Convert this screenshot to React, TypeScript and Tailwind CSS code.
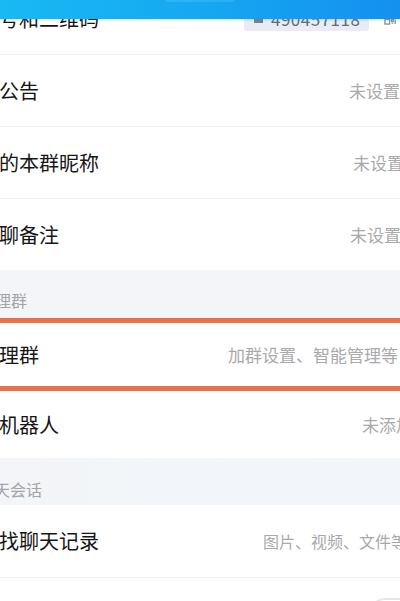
import React from 'react'

type Row = {
  label: string
  value: string
  pr: string
}

const rows: Row[] = [
  { label: '群公告', value: '未设置', pr: 'pr-[23px]' },
  { label: '我的本群昵称', value: '未设置', pr: 'pr-[19px]' },
  { label: '群聊备注', value: '未设置', pr: 'pr-[22px]' },
]

export default function App() {
  return (
    <div className="relative h-[601px] w-[400px] overflow-hidden bg-white font-['Noto_Sans_CJK_SC','Noto_Sans',sans-serif]">
      {/* nav bar over the scrolled list */}
      <div className="absolute left-0 top-0 z-10 h-[19px] w-full bg-gradient-to-r from-[#19b9f3] via-[#16a8f1] to-[#1590ef] shadow-[0_1px_2px_rgba(20,140,230,0.25)]">
        <div className="mx-auto mt-[-4px] h-[6px] w-[70px] rounded-full bg-white/10" />
      </div>

      <div className="-ml-[37px] -mt-[17px] w-[460px]">
        {/* group number */}
        <div className="flex h-[72px] items-center justify-between border-b border-[#f1f1f3] pl-4 pr-[26px]">
          <span className="text-[20px] leading-none text-[#161616]">群号和二维码</span>
          <div className="flex items-center gap-[15px]">
            <div className="flex h-[24px] w-[125px] items-center gap-[8px] rounded-[3px] bg-[#e8ecf4] pl-[10px]">
              <span className="h-[9px] w-[9px] bg-[#7c7f86]" />
              <span className="text-[17px] leading-none tracking-[0.5px] text-[#666a70]">490457118</span>
            </div>
            <svg viewBox="0 0 14 14" className="h-[13px] w-[13px] text-[#8a8d93]" fill="none" stroke="currentColor" strokeWidth="1.4">
              <rect x="1" y="1" width="5" height="5" />
              <rect x="8" y="1" width="5" height="5" />
              <rect x="1" y="8" width="5" height="5" />
              <path d="M8 8h2v2H8zM12 8v5M8 12h2" />
            </svg>
          </div>
        </div>

        {rows.map((r, i) => (
          <div
            key={r.label}
            className={`flex items-center justify-between pl-4 ${r.pr} ${i === 2 ? 'h-[71px]' : 'h-[72px] border-b border-[#f3f3f5]'}`}
          >
            <span className="text-[20px] leading-none text-[#161616]">{r.label}</span>
            <span className="text-[17px] leading-none text-[#a9a9ab]">{r.value}</span>
          </div>
        ))}

        {/* section: manage group */}
        <div className="flex h-[48px] items-end bg-[#f4f5f9] pb-[10px] pl-4">
          <span className="text-[16px] leading-none text-[#a3a4a8]">管理群</span>
        </div>

        <div className="flex h-[73px] items-center justify-between border-y-[5px] border-[#ea6f4b] pl-4 pr-[25px]">
          <span className="text-[20px] leading-none text-[#161616]">管理群</span>
          <span className="text-[17px] leading-none text-[#a9a9ab]">加群设置、智能管理等</span>
        </div>

        <div className="flex h-[67px] items-center justify-between pl-4 pr-[10px]">
          <span className="text-[20px] leading-none text-[#161616]">群机器人</span>
          <span className="text-[17px] leading-none text-[#a9a9ab]">未添加</span>
        </div>

        {/* section: chat */}
        <div className="flex h-[47px] items-end bg-gradient-to-r from-[#f3f5f8] to-[#f2f6fb] pb-[8px] pl-[15px]">
          <span className="text-[16px] leading-none text-[#a3a4a8]">聊天会话</span>
        </div>

        <div className="flex h-[73px] items-center justify-between border-b border-[#f1f1f3] pl-4 pr-[16px]">
          <span className="text-[20px] leading-none text-[#161616]">查找聊天记录</span>
          <span className="text-[16px] leading-none text-[#a9a9ab]">图片、视频、文件等</span>
        </div>

        <div className="flex h-[72px] items-start justify-between pl-4 pr-[0px] pt-[20px]">
          <span className="mt-[8px] text-[20px] leading-none text-[#161616]">置顶聊天</span>
          <span className="h-[32px] w-[54px] rounded-full border-2 border-[#e6e6e8] bg-white" />
        </div>
      </div>
    </div>
  )
}
